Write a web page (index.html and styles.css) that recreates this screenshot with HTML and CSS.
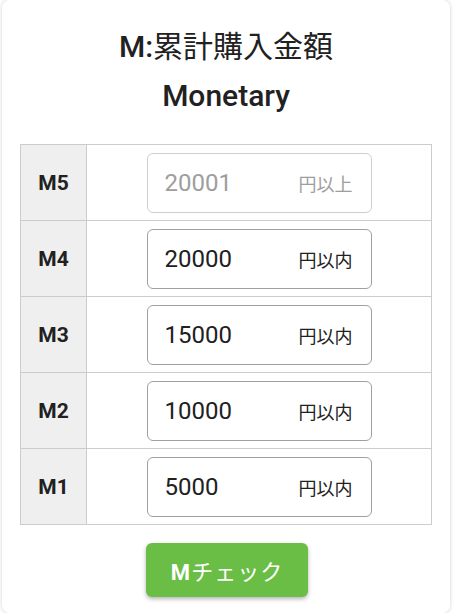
FILE: index.html
```html
<!DOCTYPE html>
<html lang="ja">
<head>
<meta charset="utf-8">
<link rel="stylesheet" href="styles.css">
</head>
<body>
<div class="card">
  <h1 class="title">M:<span class="jp">累計購入金額</span></h1>
  <h2 class="subtitle">Monetary</h2>
  <table class="rank">
    <tr>
      <th>M5</th>
      <td><div class="field disabled"><span class="val">20001</span><span class="unit">円以上</span></div></td>
    </tr>
    <tr>
      <th>M4</th>
      <td><div class="field"><span class="val">20000</span><span class="unit">円以内</span></div></td>
    </tr>
    <tr>
      <th>M3</th>
      <td><div class="field"><span class="val">15000</span><span class="unit">円以内</span></div></td>
    </tr>
    <tr>
      <th>M2</th>
      <td><div class="field"><span class="val">10000</span><span class="unit">円以内</span></div></td>
    </tr>
    <tr>
      <th>M1</th>
      <td><div class="field"><span class="val">5000</span><span class="unit">円以内</span></div></td>
    </tr>
  </table>
  <div class="actions">
    <button class="check"><b>M</b>チェック</button>
  </div>
</div>
</body>
</html>
```
FILE: styles.css
```css
html, body {
  margin: 0;
  padding: 0;
  background: #ffffff;
}
body {
  font-family: Roboto, "Noto Sans CJK JP", sans-serif;
  color: #212121;
}
.card {
  box-sizing: border-box;
  width: 448px;
  height: 613px;
  margin-left: 2px;
  background: #fff;
  border-radius: 8px;
  box-shadow: 0 0 4px rgba(0,0,0,0.18);
  padding: 26px 18px 0 18px;
}
.title {
  margin: 0;
  text-align: center;
  font-size: 30px;
  font-weight: 500;
  line-height: 42px;
}
.title .jp {
  font-weight: 400;
}
.subtitle {
  margin: 7px 0 0 0;
  text-align: center;
  font-size: 30px;
  font-weight: 500;
  line-height: 42px;
}
.rank {
  margin-top: 27px;
  width: 412px;
  border-collapse: collapse;
}
.rank th, .rank td {
  border: 1px solid #cccccc;
  height: 75px;
  padding: 0;
}
.rank th {
  width: 65px;
  background: #efefef;
  font-size: 21px;
  font-weight: 700;
  color: #212121;
}
.rank td {
  background: #fff;
}
.field {
  box-sizing: border-box;
  width: 225px;
  height: 60px;
  margin: 0 auto;
  border: 1px solid #a0a0a0;
  border-radius: 6px;
  display: flex;
  align-items: center;
  justify-content: space-between;
  padding: 0 18px 0 17px;
}
.val {
  font-size: 24px;
  color: #212121;
  padding-top: 1px;
}
.unit {
  font-size: 18px;
  color: #212121;
}
.field.disabled {
  border-color: #cfcfcf;
}
.field.disabled .val,
.field.disabled .unit {
  color: #9e9e9e;
}
.actions {
  display: flex;
  justify-content: center;
  padding-top: 18px;
}
.check {
  width: 162px;
  height: 54px;
  border: none;
  border-radius: 6px;
  background: #6abd45;
  color: #fff;
  font-family: Roboto, "Noto Sans CJK JP", sans-serif;
  font-size: 22px;
  letter-spacing: 1px;
  box-shadow: 0 2px 4px rgba(0,0,0,0.3);
  margin-left: 2px;
}
.check b {
  font-weight: 700;
}
```
